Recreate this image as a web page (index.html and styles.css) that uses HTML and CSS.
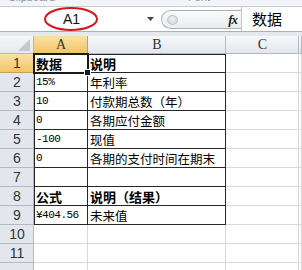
FILE: index.html
```html
<!DOCTYPE html>
<html lang="zh-CN">
<head>
    <meta charset="UTF-8">
    <title>未来值</title>
    <link rel="stylesheet" href="styles.css">
</head>
<body>
    <div class="ribbon">
        <span class="grp clip">Clipboard</span>
        <span class="grp font">Font</span>
    </div>
    <div class="fbar">
        <div class="namebox">
            <span class="ref">A1</span>
            <svg class="arrow" width="7" height="4" viewBox="0 0 7 4"><path d="M0 0H7L3.5 4Z" fill="#444"/></svg>
            <svg class="mark" width="56" height="26" viewBox="0 0 56 26"><ellipse cx="28" cy="13" rx="26" ry="11" fill="none" stroke="#d3171d" stroke-width="2"/></svg>
        </div>
        <div class="pill">
            <span class="knob"></span>
            <span class="fx">fx</span>
        </div>
        <div class="formula">数据</div>
    </div>
    <div class="gap"></div>
    <div class="sheet">
        <div class="corner"><span class="tri"></span></div>
        <div class="ch sel">A</div>
        <div class="ch">B</div>
        <div class="ch">C</div>
        <div class="ch"></div>

        <div class="rh sel">1</div>
        <div class="c t l top cur bold">数据</div>
        <div class="c t top bold">说明</div>
        <div class="c"></div><div class="c"></div>

        <div class="rh">2</div>
        <div class="c t l num">15%</div>
        <div class="c t">年利率</div>
        <div class="c"></div><div class="c"></div>

        <div class="rh">3</div>
        <div class="c t l num">10</div>
        <div class="c t">付款期总数（年）</div>
        <div class="c"></div><div class="c"></div>

        <div class="rh">4</div>
        <div class="c t l num">0</div>
        <div class="c t">各期应付金额</div>
        <div class="c"></div><div class="c"></div>

        <div class="rh">5</div>
        <div class="c t l num">-100</div>
        <div class="c t">现值</div>
        <div class="c"></div><div class="c"></div>

        <div class="rh">6</div>
        <div class="c t l num">0</div>
        <div class="c t">各期的支付时间在期末</div>
        <div class="c"></div><div class="c"></div>

        <div class="rh">7</div>
        <div class="c t l"></div>
        <div class="c t"></div>
        <div class="c"></div><div class="c"></div>

        <div class="rh">8</div>
        <div class="c t l bold">公式</div>
        <div class="c t bold">说明（结果）</div>
        <div class="c"></div><div class="c"></div>

        <div class="rh">9</div>
        <div class="c t l num">¥404.56</div>
        <div class="c t">未来值</div>
        <div class="c"></div><div class="c"></div>

        <div class="rh">10</div>
        <div class="c"></div><div class="c"></div><div class="c"></div><div class="c"></div>

        <div class="rh">11</div>
        <div class="c"></div><div class="c"></div><div class="c"></div><div class="c"></div>

        <div class="rh"></div>
        <div class="c"></div><div class="c"></div><div class="c"></div><div class="c"></div>
    </div>
</body>
</html>
```

FILE: styles.css
```css
body { margin: 0; width: 302px; height: 270px; overflow: hidden; background: #fff; font-family: "Noto Sans CJK SC", sans-serif; color: #000; }

.ribbon { height: 6px; overflow: hidden; background: #f2f4f7; border-bottom: 1px solid #c6ccd4; position: relative; }
.grp { position: absolute; top: -9px; font: 11px "Liberation Sans", sans-serif; color: #8a8f96; }
.clip { left: 8px; }
.font { left: 188px; }

.fbar { display: flex; height: 24px; background: #fff; border-bottom: 1px solid #aab1ba; }
.namebox { position: relative; width: 157px; display: flex; align-items: center; justify-content: center; }
.ref { font: 14px "Liberation Sans", sans-serif; color: #111; margin-left: -14px; }
.arrow { position: absolute; left: 147px; top: 10px; }
.mark { position: absolute; left: 43px; top: -1px; }
.pill { margin: 3px 0 0 4px; width: 80px; height: 19px; border: 1px solid #a9b0ba; border-right: none; border-radius: 11px 0 0 11px; background: linear-gradient(#fbfbfc, #e9ecef); display: flex; align-items: center; justify-content: space-between; box-sizing: border-box; }
.knob { width: 9px; height: 8px; margin-left: 5px; border-radius: 50%; background: radial-gradient(circle at 50% 35%, #f4f4f4, #c9cdd2); border: 1px solid #c2c6cc; }
.fx { font: italic bold 13px "Liberation Serif", serif; color: #222; margin-right: 4px; letter-spacing: -1px; }
.formula { flex: 1; border-left: 1px solid #c3c8cf; font-size: 15px; line-height: 23px; padding-left: 10px; }

.gap { height: 4px; background: #e5e9ee; }

.sheet { display: grid; grid-template-columns: 34px 54px 138px 73px 1fr; grid-template-rows: 18px repeat(11, 19px) 19px; }
.corner { background: linear-gradient(#f6f7f9, #e3e7ed); box-shadow: inset -1px -1px 0 #b2b9c3; position: relative; }
.tri { position: absolute; right: 4px; bottom: 3px; width: 12px; height: 12px; background: #c3c9d1; clip-path: polygon(100% 0, 100% 100%, 0 100%); }
.ch { background: linear-gradient(#f7f8fa, #e2e6ec); box-shadow: inset -1px -1px 0 #b2b9c3; font: 14px "Liberation Serif", serif; color: #333; text-align: center; line-height: 18px; }
.rh { background: #e3e7ed; box-shadow: inset -1px -1px 0 #b2b9c3; font: 14px "Liberation Sans", sans-serif; color: #333; text-align: center; line-height: 19px; }
.ch.sel, .rh.sel { background: linear-gradient(#fae0a8, #f2c462); box-shadow: inset -1px -1px 0 #c4a060; }

.c { box-shadow: inset -1px -1px 0 #d8d9db; font-size: 12.5px; line-height: 19px; padding-left: 2px; white-space: nowrap; overflow: hidden; }
.c.t { box-shadow: inset -1px -1px 0 #262626; }
.c.t.l { box-shadow: inset -1px -1px 0 #262626, inset 1px 0 0 #262626; }
.c.t.top { box-shadow: inset -1px -1px 0 #262626, inset 0 1px 0 #262626; }
.c.t.l.top { box-shadow: inset -1px -1px 0 #262626, inset 1px 1px 0 #262626; }
.num { font: 11px "Liberation Mono", monospace; letter-spacing: -0.5px; line-height: 19px; }
.bold { font-weight: bold; font-size: 13px; }
.cur { position: relative; overflow: visible; }
.cur::after { content: ""; position: absolute; left: -1px; top: -1px; right: -1px; bottom: -1px; border: 2px solid #1a1a1a; }
.cur::before { content: ""; position: absolute; right: -3px; bottom: -3px; width: 5px; height: 5px; background: #1a1a1a; border: 1px solid #fff; z-index: 1; }
```
